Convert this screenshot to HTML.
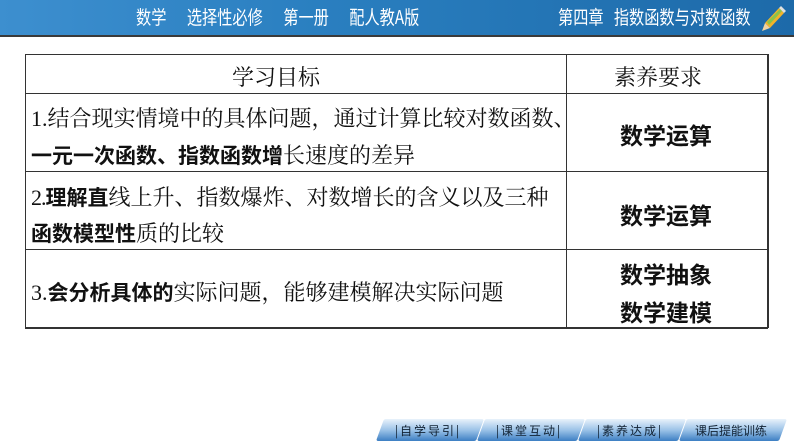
<!DOCTYPE html>
<html><head><meta charset="utf-8"><style>
*{margin:0;padding:0;box-sizing:border-box}
body{width:794px;height:447px;background:#fff;position:relative;overflow:hidden;font-family:"Liberation Serif","Noto Serif CJK SC",serif}
.hdr{position:absolute;left:0;top:0;width:794px;height:35px;background:linear-gradient(90deg,#3d8fcf 0%,#2a7fc0 40%,#1d6aa9 100%)}
.hline{position:absolute;left:0;top:35px;width:794px;height:2px;background:#3a3a3a}
.ht{position:absolute;top:6px;color:#fff;font:19px "Noto Sans CJK SC",sans-serif;line-height:22px;white-space:nowrap;transform-origin:0 0;transform:scaleX(0.8)}
.cell{position:absolute;font-size:22px;color:#111;white-space:nowrap}
.b{font-family:"Noto Sans CJK SC",sans-serif;font-weight:700;font-size:21px}
.r{font-family:"Noto Sans CJK SC",sans-serif;font-weight:700;font-size:23px}
.ln{position:absolute;background:#333}
.btn{position:absolute;top:419px;height:22px;width:100px;transform:skewX(-20deg);background:linear-gradient(#e8f2fb,#9cc3e8 50%,#3d7fc3);border-radius:2px}
.bt{position:absolute;top:422px;width:100px;text-align:center;font:12px "Noto Sans CJK SC",sans-serif;color:#123;letter-spacing:2px}
</style></head><body>
<div class="hdr"></div><div class="hline"></div>
<div class="ht" style="left:136px;transform:scaleX(0.8);word-spacing:0">数学&nbsp;&nbsp;&nbsp;&nbsp;&nbsp;&nbsp;选择性必修&nbsp;&nbsp;&nbsp;&nbsp;&nbsp;&nbsp;第一册&nbsp;&nbsp;&nbsp;&nbsp;&nbsp;&nbsp;配人教A版</div>
<div class="ht" style="left:558px">第四章&nbsp;&nbsp;&nbsp;指数函数与对数函数</div>
<svg style="position:absolute;left:759px;top:5px" width="28" height="28" viewBox="0 0 28 28">
<polygon points="6,18 20,3 25,8 11,23" fill="#f2b32a"/>
<polygon points="6,18 11,23 3,26" fill="#f0d2a0"/>
<polygon points="20,3 25,8 27,6 22,1" fill="#e0e0e0"/>
<polygon points="8,17 21,4 23,6 10,20" fill="#8bc34a"/>
</svg>
<div class="ln" style="left:25px;top:54px;width:743px;height:1px"></div>
<div class="ln" style="left:25px;top:93px;width:743px;height:1px"></div>
<div class="ln" style="left:25px;top:171px;width:743px;height:1px"></div>
<div class="ln" style="left:25px;top:249px;width:743px;height:1px"></div>
<div class="ln" style="left:25px;top:327px;width:743px;height:2px"></div>
<div class="ln" style="left:25px;top:54px;width:1px;height:274px"></div>
<div class="ln" style="left:566px;top:54px;width:1px;height:274px"></div>
<div class="ln" style="left:767px;top:54px;width:2px;height:274px"></div>
<div class="cell" style="left:232px;top:61px">学习目标</div>
<div class="cell" style="left:614px;top:61px">素养要求</div>
<div class="cell" style="left:31px;top:102px">1.结合现实情境中的具体问题，通过计算比较对数函数、</div>
<div class="cell" style="left:31px;top:139px"><span class="b">一元一次函数、指数函数增</span>长速度的差异</div>
<div class="cell r" style="left:620px;top:117px">数学运算</div>
<div class="cell" style="left:31px;top:181px"><span style="letter-spacing:-1px">2.</span><span class="b">理解直</span>线上升、指数爆炸、对数增长的含义以及三种</div>
<div class="cell" style="left:31px;top:217px"><span class="b">函数模型性</span>质的比较</div>
<div class="cell r" style="left:620px;top:197px">数学运算</div>
<div class="cell" style="left:31px;top:276px">3.<span class="b">会分析具体的</span>实际问题，能够建模解决实际问题</div>
<div class="cell r" style="left:620px;top:256px">数学抽象</div>
<div class="cell r" style="left:620px;top:294px">数学建模</div>
<div class="btn" style="left:380px"></div>
<div class="btn" style="left:481px"></div>
<div class="btn" style="left:582px"></div>
<div class="btn" style="left:683px"></div>
<div class="bt" style="left:378px">|自学导引|</div>
<div class="bt" style="left:479px">|课堂互动|</div>
<div class="bt" style="left:580px">|素养达成|</div>
<div class="bt" style="left:681px;letter-spacing:0">课后提能训练</div>
</body></html>
